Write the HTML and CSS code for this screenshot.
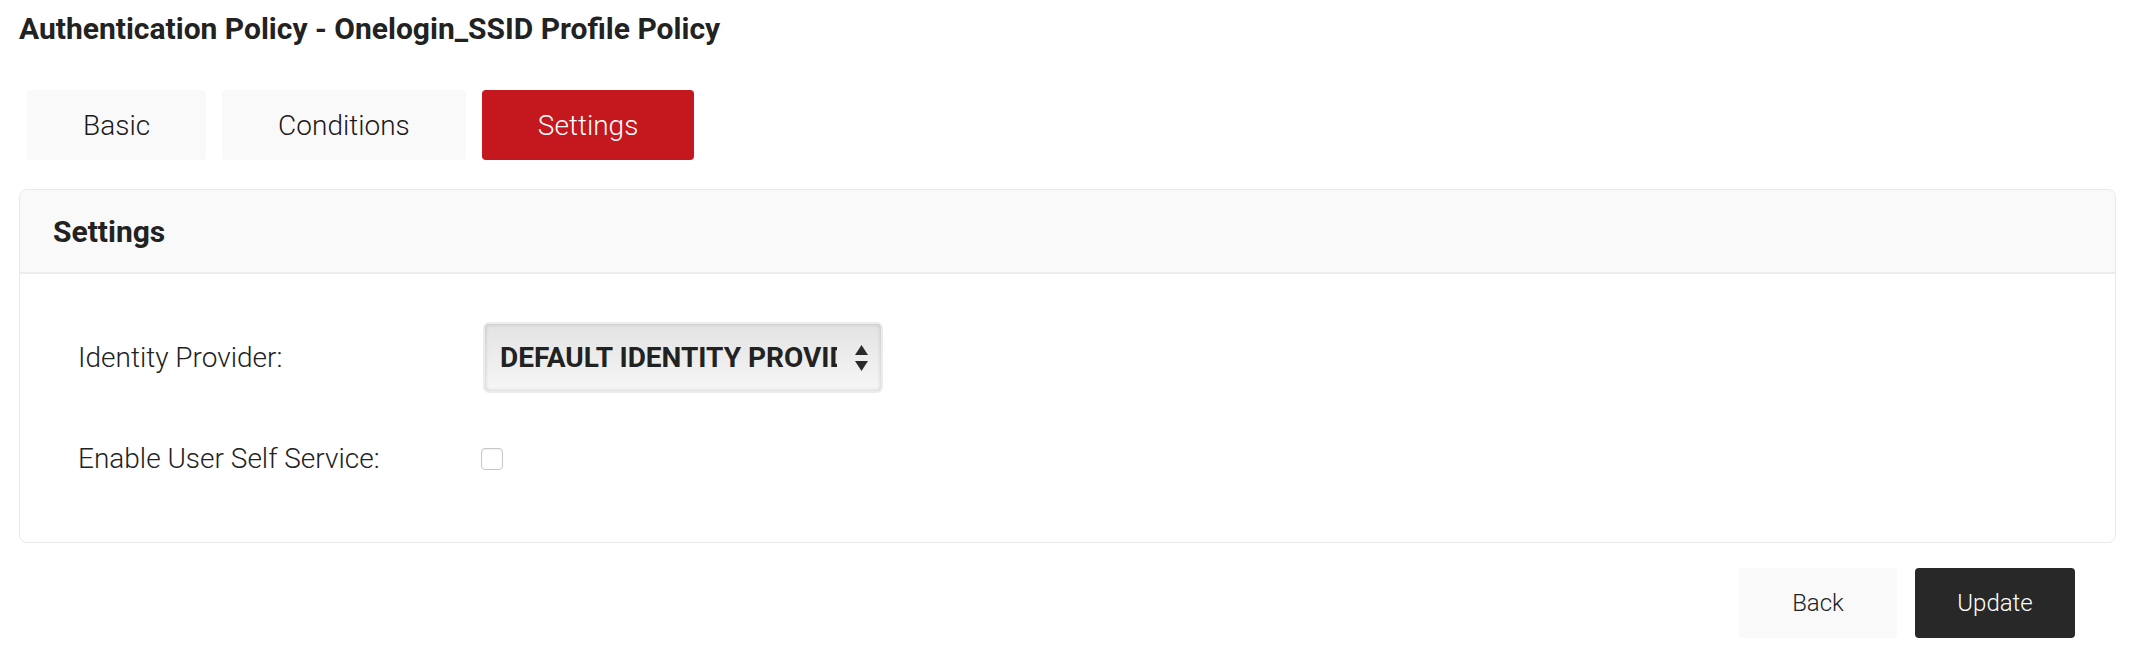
FILE: index.html
```html
<!DOCTYPE html>
<html lang="en">
<head>
    <meta charset="UTF-8">
    <meta name="viewport" content="width=device-width, initial-scale=1.0">
    <title>Authentication Policy - Onelogin_SSID Profile Policy</title>
    <link rel="stylesheet" href="styles.css">
</head>
<body>
    <h1 class="page-title">Authentication Policy - Onelogin_SSID Profile Policy</h1>

    <nav class="tabs">
        <a class="tab" href="#">Basic</a>
        <a class="tab" href="#">Conditions</a>
        <a class="tab active" href="#">Settings</a>
    </nav>

    <section class="panel">
        <div class="panel-header">
            <h2>Settings</h2>
        </div>
        <div class="panel-body">
            <div class="form-row">
                <label class="form-label">Identity Provider:</label>
                <div class="select">
                    <span class="select-value">DEFAULT IDENTITY PROVIDER</span>
                    <svg class="select-arrows" width="13" height="26" viewBox="0 0 13 26">
                        <path d="M6.5 0 L13 10 L0 10 Z" fill="#2a2a2a"/>
                        <path d="M6.5 26 L13 16 L0 16 Z" fill="#2a2a2a"/>
                    </svg>
                </div>
            </div>
            <div class="form-row">
                <label class="form-label" for="selfService">Enable User Self Service:</label>
                <input type="checkbox" id="selfService" class="checkbox">
            </div>
        </div>
    </section>

    <div class="actions">
        <button class="btn btn-light">Back</button>
        <button class="btn btn-dark">Update</button>
    </div>
</body>
</html>
```

FILE: styles.css
```css
body {
    font-family: Roboto, "Liberation Sans", sans-serif;
    margin: 0;
    padding: 10px 23px 0 19px;
    background-color: #fff;
    color: #222;
}
.page-title {
    margin: 0;
    font-size: 30px;
    line-height: 38px;
    font-weight: 700;
    color: #222;
}
.tabs {
    display: flex;
    gap: 16px;
    margin: 42px 0 0 8px;
}
.tab {
    display: block;
    height: 70px;
    line-height: 72px;
    padding: 0 56px;
    font-size: 28px;
    font-weight: 300;
    color: #1a1a1a;
    text-decoration: none;
    background: #f9f9f9;
    border-radius: 4px;
}
.tab.active {
    background: #c4171e;
    color: #fff;
}
.panel {
    margin-top: 29px;
    border: 1px solid #e9e9e9;
    border-radius: 8px;
    overflow: hidden;
}
.panel-header {
    background: #f9f9f9;
    border-bottom: 2px solid #ececec;
    height: 82px;
    display: flex;
    align-items: center;
    padding: 0 33px;
}
.panel-header h2 {
    margin: 0;
    font-size: 30px;
    font-weight: 700;
    color: #222;
}
.panel-body {
    padding: 48px 58px 48px;
    display: flex;
    flex-direction: column;
    gap: 30px;
}
.form-row {
    display: flex;
    align-items: center;
    height: 71px;
}
.form-label {
    width: 405px;
    font-size: 28px;
    font-weight: 300;
    color: #222;
}
.select {
    display: flex;
    align-items: center;
    width: 400px;
    height: 71px;
    box-sizing: border-box;
    padding: 0 13px 0 15px;
    background: linear-gradient(#e3e3e3, #f6f6f6);
    border: 2px solid #ececec;
    border-radius: 6px;
    box-shadow: inset 0 0 4px rgba(0, 0, 0, 0.18);
}
.select-value {
    width: 337px;
    overflow: hidden;
    white-space: nowrap;
    font-size: 28px;
    font-weight: 700;
    color: #222;
}
.select-arrows {
    margin-left: auto;
}
.checkbox {
    appearance: none;
    width: 22px;
    height: 22px;
    margin: 0 0 0 -2px;
    border: 1px solid #c8c8c8;
    border-radius: 4px;
    background: #fff;
    box-shadow: inset 0 1px 2px rgba(0, 0, 0, 0.06);
}
.actions {
    display: flex;
    justify-content: flex-end;
    gap: 18px;
    margin-top: 25px;
    padding-right: 41px;
}
.btn {
    width: 158px;
    height: 70px;
    padding: 0;
    font-family: Roboto, "Liberation Sans", sans-serif;
    font-size: 24px;
    font-weight: 300;
    border: none;
    border-radius: 4px;
    cursor: pointer;
}
.btn-light {
    background: #f9f9f9;
    color: #222;
}
.btn-dark {
    width: 160px;
    background: #282828;
    color: #fff;
}
```
